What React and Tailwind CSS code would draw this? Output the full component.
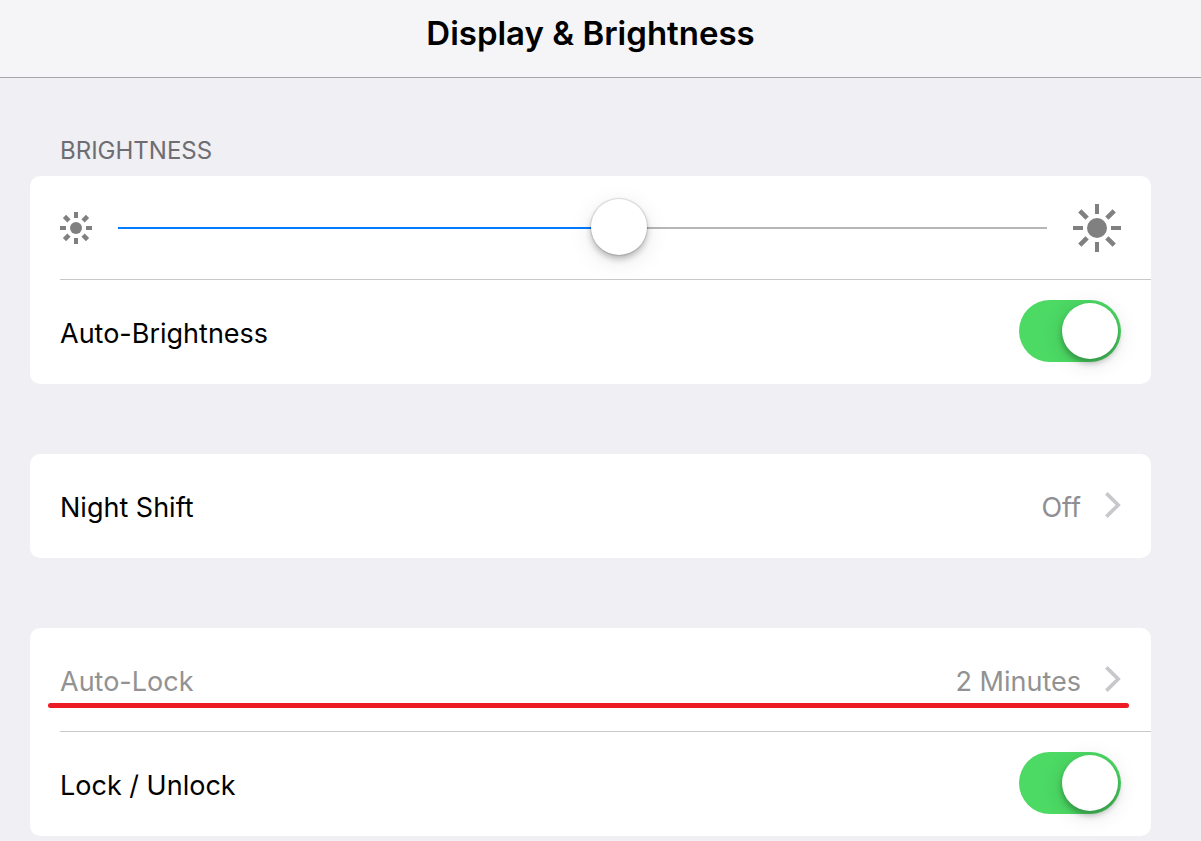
import { useState } from "react";

const STRAIGHT = [0, 90, 180, 270];
const DIAGONAL = [45, 135, 225, 315];

function Sun({ size, radius, ray, className }) {
  const c = size / 2;
  return (
    <svg
      viewBox={`0 0 ${size} ${size}`}
      className={`shrink-0 ${className}`}
      fill="#808080"
      aria-hidden="true"
    >
      <circle cx={c} cy={c} r={radius} />
      {STRAIGHT.map((a) => (
        <rect key={a} x={c - 2} y="0" width="4" height={ray} transform={`rotate(${a} ${c} ${c})`} />
      ))}
      {DIAGONAL.map((a) => (
        <rect
          key={a}
          x={c - 2.3}
          y="-0.3"
          width="4.6"
          height={ray + 0.3}
          transform={`rotate(${a} ${c} ${c})`}
        />
      ))}
    </svg>
  );
}

function Chevron() {
  return (
    <svg viewBox="0 0 16 26" className="w-4 h-[26px] shrink-0" fill="none" aria-hidden="true">
      <path d="M1.4 1.4 13.2 13 1.4 24.6" stroke="#c7c7cc" strokeWidth="3.6" />
    </svg>
  );
}

function Card({ children }) {
  return <div className="rounded-[10px] bg-white pl-[30px]">{children}</div>;
}

function SwitchRow({ id, label }) {
  const [on, setOn] = useState(true);
  return (
    <div className="flex h-26 items-center justify-between pr-[30px] pb-0.5">
      <label htmlFor={id} className="pt-1.5 text-[27px] leading-9 text-black">
        {label}
      </label>
      <input
        id={id}
        type="checkbox"
        role="switch"
        checked={on}
        onChange={(e) => setOn(e.target.checked)}
        className="flex h-[62px] w-[102px] shrink-0 cursor-pointer appearance-none items-center rounded-full bg-[#e5e5ea] p-[3px] before:size-14 before:rounded-full before:bg-white before:shadow-[0_4px_6px_rgba(0,0,0,0.28),0_4px_22px_rgba(0,0,0,0.12)] before:content-[''] checked:justify-end checked:bg-[#4cd964]"
      />
    </div>
  );
}

function LinkRow({ label, value, muted, divided, underlined }) {
  return (
    <a
      href="#"
      className={`relative flex h-26 items-center pr-[30px] pb-0.5 text-[27px] leading-9 ${
        divided ? "border-b border-[#c8c7cc]" : ""
      }`}
    >
      <span className={`grow pt-1.5 ${muted ? "text-[#929292]" : "text-black"}`}>{label}</span>
      <span className={`pt-1.5 pr-6 ${muted ? "text-[#929292]" : "text-[#8e8e93]"}`}>{value}</span>
      <Chevron />
      {underlined && (
        <span className="absolute top-[75px] right-[22px] -left-3 h-[5px] rounded-full bg-[#ed1c24]" />
      )}
    </a>
  );
}

export default function App() {
  const [level, setLevel] = useState(54.2);
  return (
    <div className="min-h-screen bg-[#efeff4] font-['Inter',sans-serif]">
      <header className="border-b border-[#a7a7aa] bg-[#f5f5f7] pr-[50px] pb-[11px] pl-[30px]">
        <h1 className="text-center text-[33px] leading-[66px] font-semibold text-black">
          Display &amp; Brightness
        </h1>
      </header>
      <main className="flex flex-col gap-[70px] pt-14 pr-[50px] pl-[30px]">
        <section>
          <h2 className="mb-2 pl-[30px] text-2xl leading-[34px] text-[#6d6d72]">BRIGHTNESS</h2>
          <Card>
            <div className="flex h-26 items-center border-b border-[#c8c7cc] pt-px pr-[30px]">
              <Sun size={32} radius={6} ray={6} className="size-8" />
              <input
                type="range"
                aria-label="Brightness"
                min="0"
                max="100"
                step="0.1"
                value={level}
                onChange={(e) => setLevel(Number(e.target.value))}
                style={{ "--level": `${level}%` }}
                className="mx-[26px] h-14 min-w-0 grow cursor-pointer appearance-none bg-transparent [&::-webkit-slider-runnable-track]:h-0.5 [&::-webkit-slider-runnable-track]:bg-[linear-gradient(to_right,#007aff_var(--level),#b6b6b6_var(--level))] [&::-webkit-slider-thumb]:-mt-7 [&::-webkit-slider-thumb]:size-14 [&::-webkit-slider-thumb]:appearance-none [&::-webkit-slider-thumb]:rounded-full [&::-webkit-slider-thumb]:bg-white [&::-webkit-slider-thumb]:shadow-[0_0_1px_1px_rgba(0,0,0,0.12),0_4px_6px_rgba(0,0,0,0.24),0_6px_24px_rgba(0,0,0,0.1)]"
              />
              <Sun size={48} radius={10} ray={10} className="size-12" />
            </div>
            <SwitchRow id="auto-brightness" label="Auto-Brightness" />
          </Card>
        </section>
        <section>
          <Card>
            <LinkRow label="Night Shift" value="Off" />
          </Card>
        </section>
        <section>
          <Card>
            <LinkRow label="Auto-Lock" value="2 Minutes" muted divided underlined />
            <SwitchRow id="lock-unlock" label="Lock / Unlock" />
          </Card>
        </section>
      </main>
    </div>
  );
}
